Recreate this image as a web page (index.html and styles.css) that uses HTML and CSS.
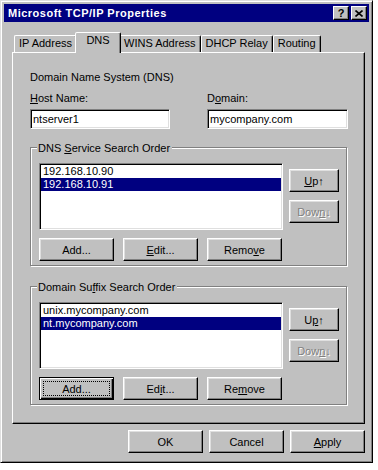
FILE: index.html
```html
<!DOCTYPE html>
<html lang="en">
<head>
    <meta charset="UTF-8">
    <meta name="viewport" content="width=device-width, initial-scale=1.0">
    <title>Microsoft TCP/IP Properties</title>
    <link rel="stylesheet" href="styles.css">
</head>
<body>
    <div class="window">
        <!-- Caption bar -->
        <div class="titlebar">
            <span class="title">Microsoft TCP/IP Properties</span>
            <div class="title-buttons">
                <span class="tbtn help">?</span>
                <span class="tbtn">
                    <svg width="8" height="7" viewBox="0 0 8 7"><path d="M0.5 0.5 L7.5 6.5 M7.5 0.5 L0.5 6.5" stroke="#000" stroke-width="1.6" fill="none"/></svg>
                </span>
            </div>
        </div>

        <!-- Tabs -->
        <div class="tabs">
            <div class="tab">IP Address</div>
            <div class="tab active">DNS</div>
            <div class="tab">WINS Address</div>
            <div class="tab">DHCP Relay</div>
            <div class="tab">Routing</div>
        </div>

        <div class="panel">
            <div class="caption">Domain Name System (DNS)</div>

            <div class="fields">
                <div class="field">
                    <label for="host"><u>H</u>ost Name:</label>
                    <input class="edit" id="host" type="text" value="ntserver1">
                </div>
                <div class="field">
                    <label for="domain">D<u>o</u>main:</label>
                    <input class="edit" id="domain" type="text" value="mycompany.com">
                </div>
            </div>

            <div class="group">
                <div class="group-title">DNS <u>S</u>ervice Search Order</div>
                <div class="group-body">
                    <div class="listbox">
                        <div class="item">192.168.10.90</div>
                        <div class="item selected">192.168.10.91</div>
                    </div>
                    <div class="side">
                        <button class="btn small"><u>U</u>p↑</button>
                        <button class="btn small" disabled>Dow<u>n</u>↓</button>
                    </div>
                </div>
                <div class="row">
                    <button class="btn">Add...</button>
                    <button class="btn"><u>E</u>dit...</button>
                    <button class="btn">Remo<u>v</u>e</button>
                </div>
            </div>

            <div class="group second">
                <div class="group-title">Domain Su<u>f</u>fix Search Order</div>
                <div class="group-body">
                    <div class="listbox">
                        <div class="item">unix.mycompany.com</div>
                        <div class="item selected">nt.mycompany.com</div>
                    </div>
                    <div class="side">
                        <button class="btn small">U<u>p</u>↑</button>
                        <button class="btn small" disabled>Dow<u>n</u>↓</button>
                    </div>
                </div>
                <div class="row">
                    <button class="btn focus">Add...</button>
                    <button class="btn">Ed<u>i</u>t...</button>
                    <button class="btn">Re<u>m</u>ove</button>
                </div>
            </div>
        </div>

        <div class="actions">
            <button class="btn">OK</button>
            <button class="btn">Cancel</button>
            <button class="btn"><u>A</u>pply</button>
        </div>
    </div>
</body>
</html>
```

FILE: styles.css
```css
body {
    margin: 0;
    background-color: #fff;
    font-family: "Liberation Sans", Arial, sans-serif;
    font-size: 11px;
    color: #000;
}
.window {
    width: 373px;
    height: 463px;
    box-sizing: border-box;
    background-color: #c0c0c0;
    border: 1px solid;
    border-color: #dfdfdf #000 #000 #dfdfdf;
    box-shadow: inset 1px 1px #fff, inset -1px -1px #808080;
    padding: 3px;
    display: flex;
    flex-direction: column;
}

/* caption */
.titlebar {
    height: 18px;
    background-color: #000080;
    color: #fff;
    display: flex;
    align-items: center;
    justify-content: space-between;
    padding: 0 2px 0 4px;
}
.title {
    font-weight: bold;
    letter-spacing: 0.5px;
}
.title-buttons {
    display: flex;
    gap: 2px;
}
.tbtn {
    width: 16px;
    height: 14px;
    box-sizing: border-box;
    background-color: #c0c0c0;
    border: 1px solid;
    border-color: #fff #000 #000 #fff;
    box-shadow: inset -1px -1px #808080;
    display: flex;
    align-items: center;
    justify-content: center;
    color: #000;
}
.tbtn.help {
    font-weight: bold;
    font-size: 11px;
    line-height: 12px;
}

/* tabs */
.tabs {
    display: flex;
    align-items: flex-end;
    height: 20px;
    margin: 10px 0 0 8px;
    padding-left: 2px;
}
.tab {
    min-width: 42px;
    box-sizing: border-box;
    text-align: center;
    line-height: 13px;
    padding: 1px 4px 2px;
    border: 1px solid;
    border-bottom: none;
    border-color: #fff #000 transparent #fff;
    border-radius: 2px 2px 0 0;
    box-shadow: inset -1px 0 #808080;
}
.tab.active {
    min-width: 46px;
    padding-bottom: 6px;
    margin: 0 -2px -1px;
    position: relative;
    z-index: 1;
    background-color: #c0c0c0;
}

/* tab page */
.panel {
    height: 372px;
    box-sizing: border-box;
    margin: 0 4px 0 8px;
    border: 1px solid;
    border-color: #fff #000 #000 #fff;
    box-shadow: inset -1px -1px #808080;
    padding: 18px 17px 0 17px;
}
.caption {
    line-height: 13px;
}
.fields {
    display: grid;
    grid-template-columns: 140px 141px;
    column-gap: 37px;
    margin-top: 8px;
}
.field label {
    display: block;
    line-height: 13px;
    margin-bottom: 4px;
}
.edit {
    display: block;
    width: 100%;
    height: 20px;
    box-sizing: border-box;
    margin: 0;
    padding: 0 2px;
    font: inherit;
    color: #000;
    background-color: #fff;
    border: 1px solid;
    border-color: #808080 #fff #fff #808080;
    box-shadow: inset 1px 1px #000, inset -1px -1px #dfdfdf;
    outline: none;
}

/* group boxes */
.group {
    margin-top: 18px;
    border: 1px solid #808080;
    box-shadow: inset 1px 1px #fff, 1px 1px #fff;
    padding: 0 7px 4px 8px;
}
.group.second {
    margin-top: 20px;
}
.group-title {
    width: fit-content;
    margin: -6px 0 0 -2px;
    padding: 0 2px 0 1px;
    line-height: 13px;
    background-color: #c0c0c0;
}
.group-body {
    display: flex;
    gap: 6px;
    margin-top: 8px;
}
.listbox {
    width: 244px;
    height: 67px;
    box-sizing: border-box;
    background-color: #fff;
    border: 1px solid;
    border-color: #808080 #fff #fff #808080;
    box-shadow: inset 1px 1px #000, inset -1px -1px #dfdfdf;
    padding: 1px;
}
.item {
    line-height: 13px;
    padding-left: 2px;
}
.item.selected {
    background-color: #000080;
    color: #fff;
}
.side {
    display: flex;
    flex-direction: column;
    gap: 8px;
    padding-top: 6px;
}
.row {
    display: flex;
    gap: 9px;
    margin-top: 8px;
}

/* push buttons */
.btn {
    width: 75px;
    height: 23px;
    box-sizing: border-box;
    margin: 0;
    padding: 0;
    font: inherit;
    color: #000;
    background-color: #c0c0c0;
    border: 1px solid;
    border-color: #fff #000 #000 #fff;
    box-shadow: inset -1px -1px #808080, inset 1px 1px #dfdfdf;
}
.btn.small {
    width: 50px;
}
.btn:disabled {
    color: #808080;
    text-shadow: 1px 1px #fff;
}
.btn.focus {
    border-color: #000;
    box-shadow: inset 1px 1px #fff, inset -1px -1px #000, inset -2px -2px #808080;
    outline: 1px dotted #000;
    outline-offset: -5px;
}

.actions {
    display: flex;
    justify-content: flex-end;
    gap: 6px;
    margin: 6px 4px 0 0;
}
```
